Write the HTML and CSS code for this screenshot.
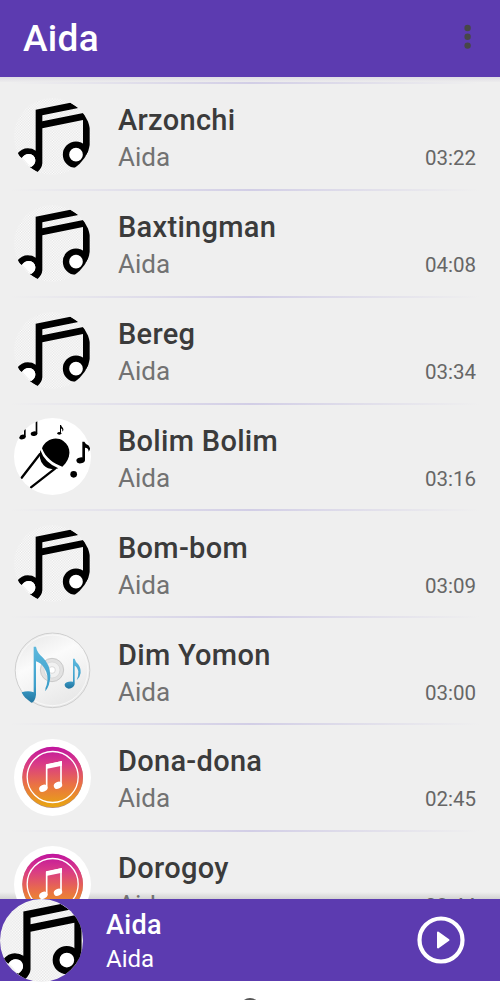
FILE: index.html
```html
<!DOCTYPE html>
<html lang="uz">

<head>
    <meta charset="UTF-8">
    <meta name="viewport" content="width=device-width, initial-scale=1.0">
    <title>Aida</title>
    <link rel="stylesheet" href="styles.css">
</head>

<body>
    <!-- cover pictures, used by the rows and the player -->
    <svg class="defs" width="0" height="0">
        <defs>
            <pattern id="dots" width="8" height="8" patternUnits="userSpaceOnUse">
                <rect width="8" height="8" fill="#fdfdfd" />
                <rect width="4" height="4" fill="#e6e6e6" />
                <rect x="4" y="4" width="4" height="4" fill="#e6e6e6" />
            </pattern>
            <linearGradient id="sunset" x1="0" y1="0" x2="0" y2="1">
                <stop offset="0" stop-color="#c0149f" />
                <stop offset="0.28" stop-color="#d93a87" />
                <stop offset="0.62" stop-color="#ea7145" />
                <stop offset="1" stop-color="#e8a70f" />
            </linearGradient>
            <linearGradient id="silver" x1="0" y1="0" x2="0.5" y2="1">
                <stop offset="0" stop-color="#e4e4e4" />
                <stop offset="0.45" stop-color="#fbfbfb" />
                <stop offset="1" stop-color="#e9e9e9" />
            </linearGradient>
            <linearGradient id="blue" x1="0" y1="0" x2="0" y2="1">
                <stop offset="0" stop-color="#5db8dd" />
                <stop offset="0.7" stop-color="#3c9fcb" />
                <stop offset="1" stop-color="#22749e" />
            </linearGradient>
            <symbol id="note" viewBox="43 39 231 231">
                <rect x="43" y="39" width="231" height="231" fill="url(#dots)" />
                <path d="M108 74 L212 53 L236 69 L128 91 V109 L251 84 L270 110 V220 H250 V105 L128 130 V235 Q127 249 113 262 L90 246 Q109 240 107 224 Q104 207 86 207 Q75 207 66 219 L52 207 Q66 190 84 190 Q99 190 108 197 Z" />
                <path d="M68 218 Q76 207 87 207 Q105 208 107 225 Q107 238 94 247 Z" fill="#fff" />
                <circle cx="229" cy="209" r="30" fill="#fff" stroke="#000" stroke-width="19" />
            </symbol>
            <symbol id="mic" viewBox="43 41 231 231">
                <rect x="43" y="41" width="231" height="231" fill="#fff" />
                <path d="M127 132 C137 106 168 94 191 110 C216 127 216 162 188 187 C161 178 137 160 127 132 Z" />
                <path d="M122 137 Q134 174 176 192 Q150 200 132 183 Q115 165 122 137 Z" />
                <path d="M121 149 L66 220 M166 193 L94 249" fill="none" stroke="#000" stroke-width="7" stroke-linecap="round" />
                <ellipse cx="68" cy="98" rx="10" ry="7" transform="rotate(-12 68 98)" />
                <path d="M73 98 V75 H78 V98 Z" />
                <ellipse cx="103" cy="88" rx="10" ry="7" transform="rotate(-12 103 88)" />
                <path d="M108 88 V51 H113 V88 Z" />
                <ellipse cx="179" cy="87" rx="6" ry="4" />
                <path d="M181 87 V62 H184 Q186 68 190 71 Q194 77 188 82 Q190 74 184 72 V87 Z" />
                <ellipse cx="243" cy="168" rx="13" ry="9" transform="rotate(-10 243 168)" />
                <path d="M248 168 V112 H254 Q257 119 266 123 Q276 132 267 142 Q267 130 256 130 V168 Z" />
                <circle cx="222" cy="210" r="10" />
            </symbol>
            <symbol id="disc" viewBox="43 50 231 231">
                <circle cx="158.500" cy="165" r="112" fill="url(#silver)" stroke="#cecece" stroke-width="3" />
                <circle cx="158.500" cy="165" r="106" fill="none" stroke="#f8f8f8" stroke-width="3" />
                <circle cx="157" cy="164" r="35" fill="#e2e2e2" stroke="#b9b9b9" stroke-width="2" />
                <circle cx="157" cy="164" r="24" fill="#f1f1f1" stroke="#d5d5d5" stroke-width="2" />
                <circle cx="157" cy="164" r="10" fill="#fff" stroke="#ccc" stroke-width="2" />
                <path d="M102 94 H109 Q112 112 130 127 Q151 147 152 181 Q151 210 137 228 Q135 220 141 209 Q149 181 134 158 Q123 142 109 138 V238 Q107 261 91 264 Q76 258 66 231 Q86 225 102 231 Z" fill="url(#blue)" />
                <path d="M220 130 H225 Q227 139 235 146 Q244 157 243 173 Q241 186 231 195 Q237 180 236 168 Q233 155 225 151 V207 Q222 219 207 220 Q194 217 195 207 Q200 197 220 199 Z" fill="url(#blue)" />
            </symbol>
            <symbol id="music" viewBox="43 42 231 231">
                <rect x="43" y="42" width="231" height="231" fill="#fff" />
                <circle cx="159" cy="158" r="91" fill="#b98a78" />
                <circle cx="159" cy="156" r="91" fill="url(#sunset)" />
                <circle cx="159" cy="156" r="76.500" fill="none" stroke="#fff" stroke-width="4" />
                <path d="M141 190 V121 L184 111 V180" fill="none" stroke="#fff" stroke-width="5" />
                <path d="M139 118 L187 108 V122 L139 132 Z" fill="#fff" />
                <ellipse cx="131" cy="190" rx="13" ry="10" fill="#fff" transform="rotate(-25 131 190)" />
                <ellipse cx="175" cy="181" rx="13" ry="10" fill="#fff" transform="rotate(-25 175 181)" />
            </symbol>
        </defs>
    </svg>

    <header class="toolbar">
        <h1>Aida</h1>
        <svg class="more" width="8" height="26" viewBox="0 0 8 26">
            <circle cx="3.600" cy="4" r="3.200" />
            <circle cx="3.600" cy="12.800" r="3.200" />
            <circle cx="3.600" cy="21.600" r="3.200" />
        </svg>
    </header>

    <ul class="songs">
        <li class="song">
            <svg class="cover"><use href="#note" /></svg>
            <div class="info">
                <div class="title">Arzonchi</div>
                <div class="artist">Aida</div>
            </div>
            <div class="time">03:22</div>
        </li>
        <li class="song">
            <svg class="cover"><use href="#note" /></svg>
            <div class="info">
                <div class="title">Baxtingman</div>
                <div class="artist">Aida</div>
            </div>
            <div class="time">04:08</div>
        </li>
        <li class="song">
            <svg class="cover"><use href="#note" /></svg>
            <div class="info">
                <div class="title">Bereg</div>
                <div class="artist">Aida</div>
            </div>
            <div class="time">03:34</div>
        </li>
        <li class="song">
            <svg class="cover"><use href="#mic" /></svg>
            <div class="info">
                <div class="title">Bolim Bolim</div>
                <div class="artist">Aida</div>
            </div>
            <div class="time">03:16</div>
        </li>
        <li class="song">
            <svg class="cover"><use href="#note" /></svg>
            <div class="info">
                <div class="title">Bom-bom</div>
                <div class="artist">Aida</div>
            </div>
            <div class="time">03:09</div>
        </li>
        <li class="song">
            <svg class="cover"><use href="#disc" /></svg>
            <div class="info">
                <div class="title">Dim Yomon</div>
                <div class="artist">Aida</div>
            </div>
            <div class="time">03:00</div>
        </li>
        <li class="song">
            <svg class="cover"><use href="#music" /></svg>
            <div class="info">
                <div class="title">Dona-dona</div>
                <div class="artist">Aida</div>
            </div>
            <div class="time">02:45</div>
        </li>
        <li class="song">
            <svg class="cover"><use href="#music" /></svg>
            <div class="info">
                <div class="title">Dorogoy</div>
                <div class="artist">Aida</div>
            </div>
            <div class="time">03:44</div>
        </li>
    </ul>

    <footer class="player">
        <svg class="player-cover"><use href="#note" /></svg>
        <div class="player-info">
            <div class="player-title">Aida</div>
            <div class="player-artist">Aida</div>
        </div>
        <svg class="play" width="48" height="48" viewBox="0 0 48 48">
            <circle cx="24" cy="24" r="21.500" fill="none" stroke="#fff" stroke-width="4.200" />
            <path d="M21 16.500 L31.500 24 L21 31.500 Z" fill="#fff" stroke="#fff" stroke-width="2" stroke-linejoin="round" />
        </svg>
    </footer>

    <nav class="navbar">
        <div class="home"></div>
    </nav>
</body>

</html>
```
FILE: styles.css
```css
* {
    box-sizing: border-box;
}

body {
    display: flex;
    flex-direction: column;
    height: 1000px;
    margin: 0;
    overflow: hidden;
    background: #fff;
    font-family: Roboto, sans-serif;
}

.defs {
    position: absolute;
}

.toolbar {
    display: flex;
    flex: none;
    align-items: center;
    justify-content: space-between;
    height: 77px;
    padding: 0 28px 0 23px;
    background: #5c3bb0;
}

.toolbar h1 {
    margin: 0;
    color: #fff;
    font-size: 37px;
    font-weight: 500;
    letter-spacing: 0.3px;
    line-height: 77px;
}

.more {
    margin-bottom: 3px;
    fill: #474747;
}

.songs {
    flex: none;
    height: 822px;
    margin: 0;
    padding: 5px 0 0;
    overflow: hidden;
    list-style: none;
    background: linear-gradient(#dfdde4, #efefef 6px, #efefef 815px, #d2d2d2);
}

.song {
    display: flex;
    align-items: center;
    height: 106.850px;
    padding: 2px 24px 0 14px;
    background: linear-gradient(to right, #efefef 2%, #d2cee6 50%, #efefef 96%) top / 100% 2px no-repeat;
}

.cover {
    flex: none;
    width: 77px;
    height: 77px;
    border-radius: 50%;
}

.info {
    flex: 1;
    margin-left: 27px;
    padding-top: 5px;
}

.title {
    color: #3b3b3b;
    font-size: 29px;
    font-weight: 500;
    letter-spacing: 0.300px;
    line-height: 38px;
}

.artist {
    color: #727272;
    font-size: 26px;
    line-height: 37px;
}

.time {
    margin-top: 44px;
    color: #666;
    font-size: 20.500px;
    line-height: 24px;
}

.player {
    display: flex;
    flex: none;
    align-items: center;
    height: 82px;
    padding-right: 35px;
    background: #5c3bb0;
}

.player-cover {
    flex: none;
    width: 83px;
    height: 83px;
    border-radius: 50%;
}

.player-info {
    flex: 1;
    margin-left: 23px;
    padding-top: 4px;
    color: #fff;
}

.player-title {
    font-size: 27px;
    font-weight: 500;
    letter-spacing: 0.300px;
    line-height: 35px;
}

.player-artist {
    font-size: 24px;
    line-height: 33px;
}

.navbar {
    display: flex;
    justify-content: center;
    height: 19px;
    padding-top: 17px;
    overflow: hidden;
}

.home {
    flex: none;
    width: 20px;
    height: 20px;
    border: 2px solid #555;
    border-radius: 50%;
}
```
